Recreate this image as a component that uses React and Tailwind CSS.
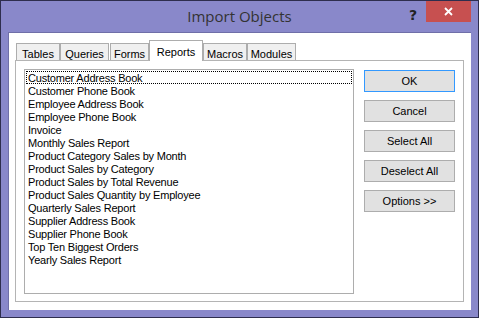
import React from "react";

const reports = [
  "Customer Address Book",
  "Customer Phone Book",
  "Employee Address Book",
  "Employee Phone Book",
  "Invoice",
  "Monthly Sales Report",
  "Product Category Sales by Month",
  "Product Sales by Category",
  "Product Sales by Total Revenue",
  "Product Sales Quantity by Employee",
  "Quarterly Sales Report",
  "Supplier Address Book",
  "Supplier Phone Book",
  "Top Ten Biggest Orders",
  "Yearly Sales Report",
];

const tabs = [
  { name: "Tables", cls: "w-[44px] ml-[1px]" },
  { name: "Queries", cls: "w-[49px]" },
  { name: "Forms", cls: "w-[39px] ml-[1px]" },
  { name: "Reports", cls: "w-[54px]", active: true },
  { name: "Macros", cls: "w-[44px]" },
  { name: "Modules", cls: "w-[49px]" },
];

const buttons = ["OK", "Cancel", "Select All", "Deselect All", "Options >>"];

export default function App() {
  return (
    <div className="w-[479px] h-[318px] bg-[#8988ca] border border-[#2e2e4e] flex flex-col font-['Liberation_Sans',Arial,sans-serif] text-[11px] text-black">
      {/* title bar */}
      <div className="h-[31px] shrink-0 flex items-start relative">
        <div className="flex-1 text-center pt-[4px] text-[15px] text-[#333] font-['Open_Sans',sans-serif]">Import Objects</div>
        <div className="absolute left-[408px] top-[4px] text-[14px] font-bold text-[#222] font-['DejaVu_Sans',sans-serif]">?</div>
        <div className="absolute left-[425px] top-0 w-[45px] h-[21px] bg-[#c75050] flex items-center justify-center">
          <svg width="9" height="9" viewBox="0 0 9 9">
            <path d="M1 1L8 8M8 1L1 8" stroke="white" strokeWidth="1.8" />
          </svg>
        </div>
      </div>

      {/* client area */}
      <div className="mx-[7px] mb-[7px] flex-1 bg-white border-l border-t border-[#6f6fa8] pl-[6px] pr-[7px] pb-[8px] flex flex-col">
        <div className="h-[27px] flex items-end relative z-10">
          {tabs.map((t) =>
            t.active ? (
              <div
                key={t.name}
                className={`${t.cls} h-[21px] -mb-[1px] bg-white border border-b-0 border-[#adadad] flex justify-center pt-[3px]`}
              >
                {t.name}
              </div>
            ) : (
              <div
                key={t.name}
                className={`${t.cls} h-[17px] bg-[#f0f0f0] border border-[#adadad] border-b-0 flex justify-center pt-[2px]`}
              >
                {t.name}
              </div>
            )
          )}
        </div>
        <div className="flex-1 border border-[#b4b4b4] flex pl-[8px] pt-[8px] pb-[7px] pr-[8px]">
          <div className="w-[330px] border border-[#adadad] p-[1px] tracking-[-0.2px]">
            {reports.map((r, i) => (
              <div
                key={r}
                className={`h-[13px] leading-[14px] pl-[2px] ${i === 0 ? "outline outline-1 outline-dotted outline-black -outline-offset-1" : ""}`}
              >
                {r}
              </div>
            ))}
          </div>
          <div className="ml-auto flex flex-col gap-[8px] pt-[1px]">
            {buttons.map((b, i) => (
              <div
                key={b}
                className={`w-[91px] h-[22px] bg-[#e1e1e1] border flex items-center justify-center ${i === 0 ? "border-[#3399ff]" : "border-[#adadad]"}`}
              >
                {b}
              </div>
            ))}
          </div>
        </div>
      </div>
    </div>
  );
}
